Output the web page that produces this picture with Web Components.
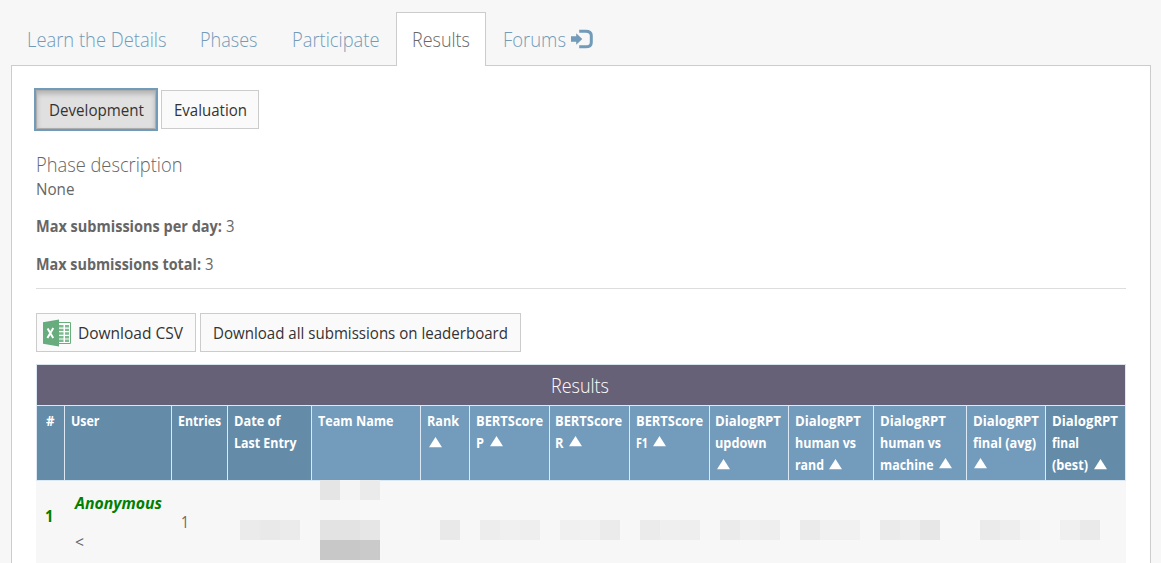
<!DOCTYPE html>
<html lang="en">
<head>
<meta charset="utf-8">
<title>Results</title>
<style>
html,body{margin:0;height:563px;overflow:hidden;background:#f7f7f7}
body{font-family:"Open Sans","Noto Sans",sans-serif;font-size:15.5px;color:#666}
</style>
</head>
<body>
<results-page></results-page>
<script>
// Single line of text set to a given measure.
class UiText extends HTMLElement{
  connectedCallback(){
    if(this.shadowRoot) return;
    const w=+this.getAttribute('w');
    this.attachShadow({mode:'open'}).innerHTML=`<style>
      :host{display:inline-block;width:${w}px;vertical-align:top;white-space:nowrap}
      span{display:inline-block;transform-origin:0 50%}</style><span><slot></slot></span>`;
    const s=this.shadowRoot.querySelector('span');
    const r=s.getBoundingClientRect().width;
    if(r) s.style.transform=`scaleX(${w/r})`;
  }
}
class NavTab extends HTMLElement{
  connectedCallback(){
    this.attachShadow({mode:'open'}).innerHTML=`<style>
      :host{display:flex;align-items:center;box-sizing:border-box;height:53px;padding:1px 16px 0;color:#729bb9;font-size:20px;font-weight:350;line-height:53px;border:1px solid transparent;border-bottom:0}
      :host([active]){background:#fff;border-color:#ccc;color:#666;height:54px;padding:0 15px 1px}
      </style><slot></slot>`;
  }
}
class UiButton extends HTMLElement{
  connectedCallback(){
    this.attachShadow({mode:'open'}).innerHTML=`<style>
      :host{display:flex;box-sizing:border-box;height:39px;border:1px solid #ccc;background:#fafafa;color:#333;line-height:38px;padding:0 12px;align-items:center}
      :host([active]){background:#e0e0e0;border-color:#adadad;box-shadow:0 0 0 2px #729bb9,inset 0 3px 5px rgba(0,0,0,.2)}
      </style><slot></slot>`;
  }
}
class ExcelIcon extends HTMLElement{
  connectedCallback(){
    this.attachShadow({mode:'open'}).innerHTML=`<style>:host{display:block;width:28px;height:28px}svg{display:block}</style>
    <svg width="28" height="28" viewBox="0 0 28 28"><path d="M15 3.5h12.5v21H15z" fill="#fff" stroke="#6aae7e"/>
    <path d="M16 6h4.5v2.4H16zM22 6h4v2.4h-4zM16 9.7h4.5v2.4H16zM22 9.7h4v2.4h-4zM16 13.3h4.5v2.4H16zM22 13.3h4v2.4h-4zM16 17h4.5v2.4H16zM22 17h4v2.4h-4zM16 20.6h4.5V23H16zM22 20.6h4V23h-4z" fill="#7dba90"/>
    <path d="M0 3.3 16 .4v27.2L0 24.7z" fill="#67ac7c"/><path d="M4.6 9.5 10.2 19M10.3 9 4.4 19" stroke="#fff" stroke-width="2" fill="none"/></svg>`;
  }
}
class LoginIcon extends HTMLElement{
  connectedCallback(){
    this.attachShadow({mode:'open'}).innerHTML=`<style>:host{display:block;width:22px;height:20px;margin-top:-1px}svg{display:block}</style>
    <svg width="22" height="20" viewBox="0 0 22 20"><path d="M0 7.2h5.2V4.3L11.3 10l-6.1 5.7v-2.9H0z" fill="#729bb9"/><path d="M8.2 2.2h6.4c3.6 0 5.7 1.4 5.7 4.4v6.8c0 3-2.1 4.4-5.7 4.4H8.2" fill="none" stroke="#729bb9" stroke-width="3"/></svg>`;
  }
}
class SortMark extends HTMLElement{
  connectedCallback(){
    this.attachShadow({mode:'open'}).innerHTML=`<style>:host{display:inline-block;vertical-align:top;width:13px;height:10px;margin-top:5px}svg{display:block}</style>
    <svg width="13" height="11" viewBox="0 0 13 11"><path d="M6.5 0 13 10.3H0z" fill="#fff"/></svg>`;
  }
}
class HeadCell extends HTMLElement{
  connectedCallback(){
    this.attachShadow({mode:'open'}).innerHTML=`<style>
      :host{display:block;box-sizing:border-box;height:74px;padding:4px 0 0 6px;border-left:1px solid #dce8f3;background:#739bbb;color:#fff;font-size:14px;font-weight:700;line-height:22px;white-space:nowrap}
      :host([dark]){background:#648ca9}</style><slot></slot>`;
  }
}
// Row of 20px shaded squares hiding a value.
class MaskedValue extends HTMLElement{
  connectedCallback(){
    const c=this.getAttribute('shades').split(' ');
    this.attachShadow({mode:'open'}).innerHTML=`<style>:host{display:flex;height:20px}i{width:20px;height:20px}</style>`+c.map(x=>`<i style="background:#${x}"></i>`).join('');
  }
}
class ResultsTable extends HTMLElement{
  connectedCallback(){
    const cols=[28,107,56,84,109,49,80,80,80,79,85,93,79,80];
    // Each header line: [text, measure, gap before sort mark, mark lift].
    const heads=[
      [['#',8.5]],[['User',28.5]],[['Entries',43]],[['Date of',46.5],['Last Entry',62.5]],[['Team Name',75.5]],
      [['Rank',32],[null,0,2]],[['BERTScore',67],['P',8,6,1]],[['BERTScore',67],['R',8.5,5,1]],[['BERTScore',67],['F1',12,5.5,1]],
      [['DialogRPT',66],['updown',51.5],[null,0,2]],[['DialogRPT',66],['human vs',61],['rand',29,5]],
      [['DialogRPT',66],['human vs',61],['machine',53.5,5,1]],[['DialogRPT',66],['final (avg)',63],[null,0,1,1]],[['DialogRPT',66],['final',27],['(best)',36,6]]];
    const dark=new Set([0,1,2,3,13]);
    const left=[2.5,0,0,0,0,-.5,-.5,-.7,-.5,-.7,0,0,-.3,0];
    const th=heads.map((ls,i)=>`<head-cell ${dark.has(i)?'dark':''}><div style="margin-left:${left[i]}px">${ls.map(([t,w,g,up])=>`<div class="l">${t?`<ui-text w="${w}">${t}</ui-text>`:''}${g!=null?`<sort-mark style="margin-left:${g}px;${up?'margin-top:4px':''}"></sort-mark>`:''}</div>`).join('')}</div></head-cell>`).join('');
    const masks={3:[13,'ebebeb e9e9e9 ebebeb'],5:[0,'f6f6f6 e9e9e9'],6:[11,'ededed f0f0f0 eeeeee'],7:[11,'f0f0f0 f1f1f1 ebebeb'],8:[11,'ebebeb efefef eeeeee'],9:[11,'ebebeb f0f0f0 eeeeee'],10:[12,'ebebeb f1f1f1 f1f1f1'],11:[7,'ebebeb eeeeee e7e7e7'],12:[14,'ebebeb eeeeee f4f4f4'],13:[15,'f0f0f0 eaeaea']};
    const td=cols.map((_,i)=>{
      if(i==0) return `<div class="rank"><ui-text w="8.5">1</ui-text></div>`;
      if(i==1) return `<div class="user"><b><ui-text w="87">Anonymous</ui-text></b><p><ui-text w="9">&lt;</ui-text></p></div>`;
      if(i==2) return `<div class="entries"><ui-text w="8">1</ui-text></div>`;
      if(i==4) return `<div class="team"><masked-value shades="e5e5e5 f4f4f4 ebebeb"></masked-value><masked-value shades="f6f6f6 f7f7f7 f8f8f8"></masked-value><masked-value shades="e3e3e3 e3e3e3 e6e6e6"></masked-value><masked-value shades="c8c8c8 c8c8c8 cacaca"></masked-value></div>`;
      return `<div class="masked" style="padding-left:${masks[i][0]}px"><masked-value shades="${masks[i][1]}"></masked-value></div>`;
    }).join('');
    this.attachShadow({mode:'open'}).innerHTML=`<style>
      :host{display:block;width:1090px;box-sizing:border-box;border-top:1px solid #d9e3ec}
      .title{height:40px;line-height:41px;background:#676178;color:#fff;font-size:20px;font-weight:350;text-align:center;border:solid #dce8f3;border-width:0 1px 1px;box-sizing:content-box;width:1088px}
      .title ui-text{margin-right:2px}
      .grid{display:grid;grid-template-columns:${cols.map(c=>c+'px').join(' ')}}
      .head{border-right:1px solid #dce8f3;border-bottom:1px solid #dce8f3;width:1089px}
      .l{height:22px;display:flex;align-items:flex-start}
      .body{height:82px;background:#f7f7f7}
      .rank{color:green;font-weight:700;padding:24px 0 0 9px;line-height:22px;font-size:15.5px}
      .user{padding:11px 0 0 11px;line-height:22px}
      .user b{display:block;color:green;font-style:italic;font-weight:700}
      .user p{margin:17px 0 0}
      .entries{padding:30px 0 0 10px;line-height:22px}
      .team{margin-top:-1px;padding-left:9px;z-index:1}
      .masked{padding-top:39px}
      </style>
      <div class="title"><ui-text w="58">Results</ui-text></div>
      <div class="grid head">${th}</div><div class="grid body">${td}</div>`;
  }
}
class ResultsPage extends HTMLElement{
  connectedCallback(){
    this.attachShadow({mode:'open'}).innerHTML=`<style>
      :host{display:block;padding:12px 10px 0 11px}
      nav{display:flex;height:53px;align-items:flex-start;position:relative;z-index:1}
      nav nav-tab:first-child{margin-left:-1.5px}
      main{box-sizing:border-box;height:510px;border:1px solid #ccc;border-bottom:0;background:#fff;padding:24px 24px 0}
      .row{display:flex}
      h3{margin:23px 0 0 -.5px;font-weight:350;font-size:20px;line-height:26px;height:26px}
      p{margin:0 0 0 -.5px;line-height:22px;height:22px;display:flex;gap:4px}
      hr{border:0;height:1px;background:#ddd;margin:13px 0 24px}
      b{font-weight:700}
    </style>
    <nav>
      <nav-tab><ui-text w="139.5">Learn the Details</ui-text></nav-tab>
      <nav-tab><ui-text w="57.5">Phases</ui-text></nav-tab>
      <nav-tab><ui-text w="87.5">Participate</ui-text></nav-tab>
      <nav-tab active><ui-text w="58">Results</ui-text></nav-tab>
      <nav-tab><ui-text w="63">Forums</ui-text><login-icon style="margin-left:5px"></login-icon></nav-tab>
    </nav>
    <main>
      <div class="row" style="gap:5px"><ui-button active style="width:120px"><ui-text style="margin-left:-.5px" w="95">Development</ui-text></ui-button><ui-button style="width:98px"><ui-text style="margin-left:-.5px" w="73">Evaluation</ui-text></ui-button></div>
      <h3><ui-text w="146.5">Phase description</ui-text></h3>
      <p><ui-text w="38.5">None</ui-text></p>
      <p style="margin-top:15px"><b><ui-text w="186">Max submissions per day:</ui-text></b><ui-text w="8.5">3</ui-text></p>
      <p style="margin-top:16px"><b><ui-text w="165">Max submissions total:</ui-text></b><ui-text w="8.5">3</ui-text></p>
      <hr>
      <div class="row" style="gap:4px;margin-bottom:12px"><ui-button style="width:160px;padding:0 6px"><excel-icon></excel-icon><ui-text style="margin-left:7px" w="105">Download CSV</ui-text></ui-button><ui-button style="width:321px"><ui-text w="295">Download all submissions on leaderboard</ui-text></ui-button></div>
      <results-table></results-table>
    </main>`;
  }
}
for(const [n,c] of [['nav-tab',NavTab],['ui-button',UiButton],['excel-icon',ExcelIcon],['login-icon',LoginIcon],['sort-mark',SortMark],['head-cell',HeadCell],['masked-value',MaskedValue],['results-table',ResultsTable],['results-page',ResultsPage],['ui-text',UiText]]) customElements.define(n,c);
</script>
</body>
</html>
